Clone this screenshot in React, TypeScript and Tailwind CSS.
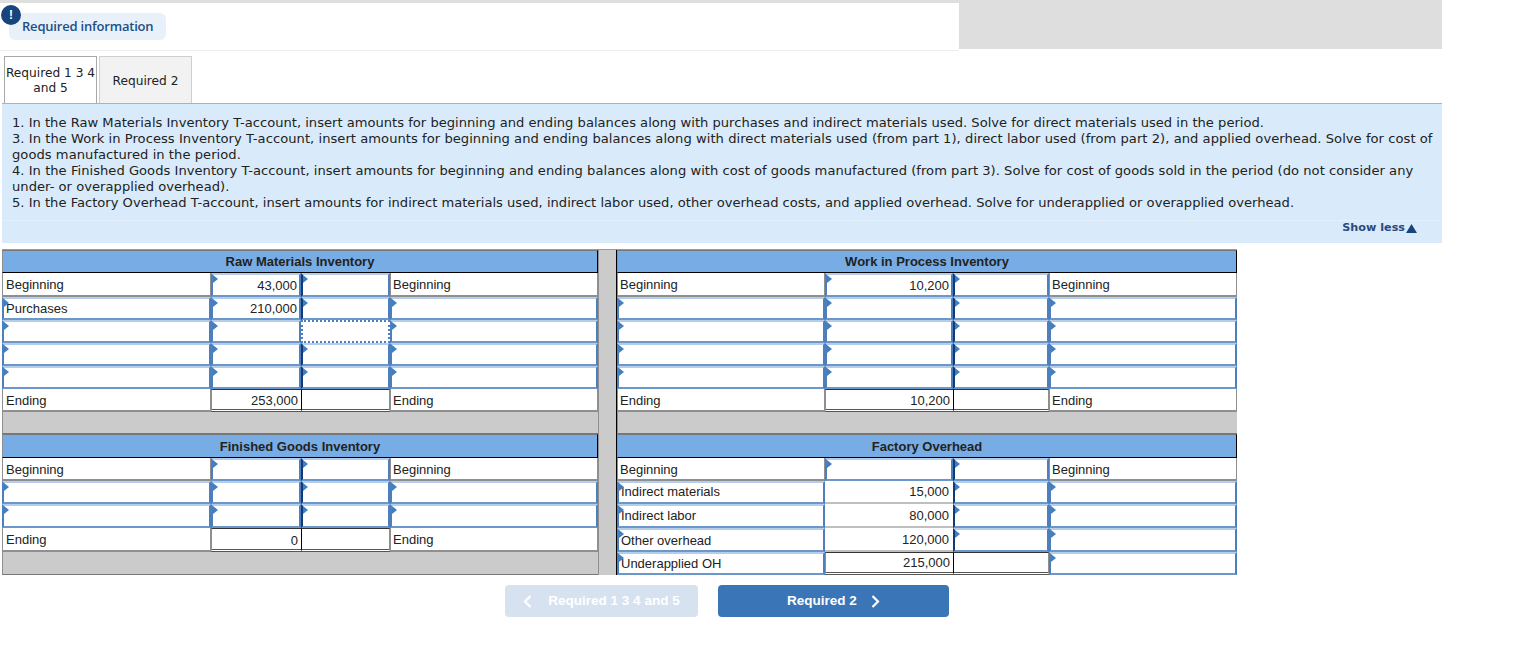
import { ReactNode } from "react";

const Marker = () => (
  <span className="absolute left-0 top-0 h-0 w-0 border-y-[4px] border-l-[5px] border-y-transparent border-l-[#3f7fc4]" />
);

type CellProps = { text?: string; right?: boolean; dark?: boolean; up?: boolean; first?: boolean };

// plain label, like "Beginning"
const Label = ({ text, first, up }: CellProps) => (
  <div
    className={`flex items-center border-x border-b-2 border-x-[#8f8f8f] border-b-[#8f8f8f] text-[13px] leading-none text-[#222] ${
      first ? "pl-[3px]" : "pl-[2px]"
    } ${up ? "" : "pt-[1px]"}`}
  >
    {text}
  </div>
);

// editable cell with the blue frame and little triangle
const Input = ({ text, right, dark, up }: CellProps) => (
  <div
    className={`relative flex items-center border-x-2 border-y-2 border-x-[#4d7fbd] border-t-[#b4cdea] border-b-[#6c97cb] bg-white text-[13px] leading-none text-[#222] ${
      right ? "justify-end pr-[2px]" : "pl-[2px]"
    } ${dark ? "border-l-[#123a78]" : ""} ${up ? "pb-[2px]" : ""}`}
  >
    <Marker />
    {text}
  </div>
);

// the one cell that has keyboard focus in the screenshot
const Focused = () => <div className="border-2 border-dotted border-[#4d7fbd] bg-white" />;

// total row amount
const Total = ({ text, up }: CellProps) => (
  <div
    className={`flex items-center justify-end border-b-[3px] border-l border-t border-double border-b-[#555] border-l-[#8f8f8f] border-t-[#333] pr-[3px] text-[13px] leading-none text-[#222] ${
      up ? "" : "pt-[2px]"
    }`}
  >
    {text}
  </div>
);

const TotalEmpty = () => <div className="border-b-[3px] border-x border-t border-double border-b-[#555] border-l-black border-r-[#8f8f8f] border-t-[#333]" />;

const Header = ({ title }: { title: string }) => (
  <div className="col-span-4 flex items-center justify-center border-y border-l border-r border-b-black border-l-[#8f8f8f] border-r-black border-t-[#777] bg-[#78ace4] text-[13px] font-bold leading-none text-[#222]">
    {title}
  </div>
);

const Gray = () => <div className="col-span-4 border-b border-l border-b-[#777] border-l-[#8f8f8f] bg-[#cbcbcb]" />;

const Row = ({ children }: { children: ReactNode }) => <>{children}</>;

const Amount = ({ text }: CellProps) => (
  <div className="flex items-center justify-end border-b-2 border-b-[#bfbfbf] pr-[4px] text-[13px] leading-none text-[#222]">
    {text}
  </div>
);

const EmptyRow = () => (
  <Row>
    <Input />
    <Input />
    <Input dark />
    <Input />
  </Row>
);

const BeginRow = ({ amount, first }: { amount?: string; first?: boolean }) => (
  <Row>
    <Label text="Beginning" first={first} />
    <Input text={amount} right />
    <Input dark />
    <Label text="Beginning" />
  </Row>
);

const EndRow = ({ amount, first }: { amount: string; first?: boolean }) => (
  <Row>
    <Label text="Ending" first={first} />
    <Total text={amount} />
    <TotalEmpty />
    <Label text="Ending" />
  </Row>
);

const App = () => {
  return (
    <div className="h-[662px] w-[1525px] overflow-hidden bg-white font-['Liberation_Sans',sans-serif]">
      <div className="flex h-[51px] w-[1442px]">
        <div className="relative h-[51px] w-[959px] border-b border-t-[3px] border-b-[#eeeeee] border-t-[#dedede]">
          <span className="absolute left-[1px] top-[2px] flex h-5 w-5 items-center justify-center rounded-full bg-[#17447c] text-[12px] font-bold text-white">
            !
          </span>
          <div className="ml-[9px] mt-[10px] flex h-[27px] w-[157px] items-center rounded-md bg-[#e8f1fa] pl-[13px] font-['Open_Sans',sans-serif] text-[13px] font-semibold tracking-[-0.2px] text-[#1f4e82]">
            Required information
          </div>
        </div>
        <div className="h-[49px] flex-1 bg-[#dedede]" />
      </div>

      <div className="mt-[5px] flex items-end gap-[2px] pl-1 font-['DejaVu_Sans',sans-serif] text-[12.2px] leading-[15px] text-[#222]">
        <div className="flex h-[47px] w-[93px] items-center justify-center border border-b-0 border-[#a8a8a8] bg-white pt-[2px] text-center">
          Required 1 3 4 and 5
        </div>
        <div className="flex h-[47px] w-[93px] items-center justify-center border border-b-0 border-[#cfcfcf] bg-[#f2f2f2] pt-[2px]">
          Required 2
        </div>
      </div>

      <div className="ml-[2px] h-[140px] w-[1440px] border-t border-t-[#b0b0b0] bg-[#d9ebfa] font-['DejaVu_Sans',sans-serif] text-[13.1px] leading-4 text-[#222]">
        <div className="h-[116px] pl-[10px] pr-[6px] pt-[11px]">
          <p>1. In the Raw Materials Inventory T-account, insert amounts for beginning and ending balances along with purchases and indirect materials used. Solve for direct materials used in the period.</p>
          <p className="tracking-[0.04px]">3. In the Work in Process Inventory T-account, insert amounts for beginning and ending balances along with direct materials used (from part 1), direct labor used (from part 2), and applied overhead. Solve for cost of goods manufactured in the period.</p>
          <p className="tracking-[0.025px]">4. In the Finished Goods Inventory T-account, insert amounts for beginning and ending balances along with cost of goods manufactured (from part 3). Solve for cost of goods sold in the period (do not consider any under- or overapplied overhead).</p>
          <p>5. In the Factory Overhead T-account, insert amounts for indirect materials used, indirect labor used, other overhead costs, and applied overhead. Solve for underapplied or overapplied overhead.</p>
        </div>
        <div className="flex h-[23px] items-center justify-end gap-[1px] border-t border-t-[#e3f0fb] pb-[8px] pr-[25px] text-[11.2px] font-bold leading-[14px] text-[#2b4a7f]">
          Show less
          <svg width="11" height="9" viewBox="0 0 11 9">
            <path d="M5.5 0 L11 9 L0 9 Z" fill="#17447c" />
          </svg>
        </div>
      </div>

      <div className="ml-[2px] mt-[6px] grid w-[1235px] grid-cols-[209px_90px_89px_208px_19px_208px_128px_96px_188px] grid-rows-[23px_24px_23px_23px_23px_23px_23px_22px_24px_23px_23px_24px_24px_23px] border-t border-t-[#9a9a9a]">
        <div className="col-start-5 row-span-14 row-start-1 border-l border-r border-l-[#8f8f8f] border-r-black bg-[#cbcbcb]" />

        <Header title="Raw Materials Inventory" />
        <Header title="Work in Process Inventory" />

        <BeginRow amount="43,000" first />
        <BeginRow amount="10,200" />

        <Input text="Purchases" />
        <Input text="210,000" right />
        <Input dark />
        <Input />
        <EmptyRow />

        <Input />
        <Input />
        <Focused />
        <Input />
        <EmptyRow />

        <EmptyRow />
        <EmptyRow />
        <EmptyRow />
        <EmptyRow />

        <EndRow amount="253,000" first />
        <EndRow amount="10,200" />

        <Gray />
        <Gray />

        <Header title="Finished Goods Inventory" />
        <Header title="Factory Overhead" />

        <BeginRow first />
        <BeginRow />

        <EmptyRow />
        <Input text="Indirect materials" up />
        <Amount text="15,000" />
        <Input dark />
        <Input />

        <EmptyRow />
        <Input text="Indirect labor" up />
        <Amount text="80,000" />
        <Input dark />
        <Input />

        <EndRow amount="0" first />
        <Input text="Other overhead" />
        <Amount text="120,000" />
        <Input dark />
        <Input />

        <Gray />
        <Input text="Underapplied OH" />
        <Total text="215,000" up />
        <TotalEmpty />
        <Input />
      </div>

      <div className="mt-[10px] flex gap-5 pl-[505px] text-[13.5px] font-bold text-white">
        <button className="flex h-8 w-[193px] items-center justify-center gap-4 rounded-sm bg-[#d6e2f0] pt-[1px]">
          <svg width="9" height="13" viewBox="0 0 9 13" fill="none" stroke="white" strokeWidth="2.2">
            <path d="M7.5 1 L2 6.5 L7.5 12" />
          </svg>
          Required 1 3 4 and 5
        </button>
        <button className="flex h-8 w-[231px] items-center justify-center gap-[14px] rounded-sm bg-[#3a75b8] pt-[1px]">
          Required 2
          <svg width="9" height="13" viewBox="0 0 9 13" fill="none" stroke="white" strokeWidth="2.2">
            <path d="M1.5 1 L7 6.5 L1.5 12" />
          </svg>
        </button>
      </div>
    </div>
  );
};

export default App;
